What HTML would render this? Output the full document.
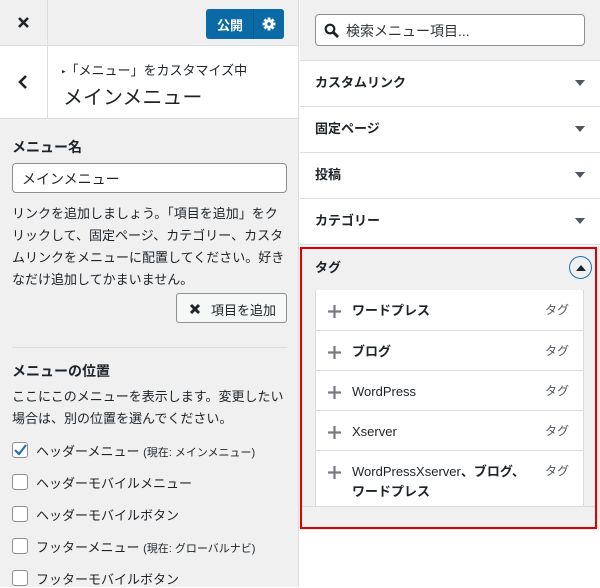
<!DOCTYPE html>
<html><head><meta charset="utf-8"><style>
*{box-sizing:border-box;margin:0;padding:0}
body{width:600px;height:587px;overflow:hidden;font-family:"Liberation Sans","Noto Sans CJK JP",sans-serif;color:#1d2327;background:#fff;position:relative;font-size:13px}
.a{position:absolute}
.left{left:0;top:0;width:299px;height:587px;background:#f0f0f1;border-right:1px solid #dcdcde}
.cb{position:absolute;left:12px;width:16px;height:16px;border:1px solid #8c8f94;border-radius:3px;background:#fff}
.cl{position:absolute;left:36px;font-size:13px}
.row{position:absolute;left:300px;width:300px;height:46px;border-bottom:1px solid #dcdcde;background:#fff}
.row b{position:absolute;left:15px;top:11px;font-size:13px}
.row i{position:absolute;right:15px;top:19px;width:0;height:0;border-left:5px solid transparent;border-right:5px solid transparent;border-top:6px solid #50575e}
.it{position:absolute;left:315px;width:269px;height:40px;background:#fff;border:1px solid #dcdcde;border-top:none}
.it svg{position:absolute;left:11px;top:14px}
.it .n{position:absolute;left:36px;top:11px;font-weight:bold;font-size:13px;line-height:20px}
.it .t{position:absolute;right:14px;top:11px;color:#50575e;font-size:12px}
</style></head><body>
<div class="a left">
 <div class="a" style="left:0;top:0;width:298px;height:46px;border-bottom:1px solid #dcdcde"></div>
 <div class="a" style="left:47px;top:0;width:1px;height:46px;background:#dcdcde"></div>
 <svg class="a" style="left:17px;top:16px" width="13" height="13"><path d="M2 2 L11 11 M11 2 L2 11" stroke="#1d2327" stroke-width="2.6"/></svg>
 <div class="a" style="left:206px;top:9px;width:78px;height:30px;background:#0a6aa5;border-radius:3px;color:#fff">
  <span class="a" style="left:11px;top:6px;font-weight:bold;font-size:13px">公開</span>
  <span class="a" style="left:47px;top:0;width:1px;height:30px;background:#08598b"></span>
  <svg class="a" style="left:56px;top:8px" width="14" height="14" viewBox="0 0 14 14"><g fill="#fff"><circle cx="7" cy="7" r="4.5"/><rect x="5.6" y="0.5" width="2.8" height="13"/><rect x="0.5" y="5.6" width="13" height="2.8"/><rect x="5.6" y="0.5" width="2.8" height="13" transform="rotate(45 7 7)"/><rect x="5.6" y="0.5" width="2.8" height="13" transform="rotate(-45 7 7)"/></g><circle cx="7" cy="7" r="1.8" fill="#0a6aa5"/></svg>
 </div>
 <div class="a" style="left:0;top:46px;width:298px;height:73px;background:#fff;border-bottom:1px solid #dcdcde"></div>
 <div class="a" style="left:47px;top:46px;width:1px;height:73px;background:#dcdcde"></div>
 <svg class="a" style="left:17px;top:74px" width="12" height="16"><path d="M9 2 L3 8 L9 14" stroke="#1d2327" stroke-width="2.6" fill="none"/></svg>
 <div class="a" style="left:62px;top:60px;font-size:13px"><span style="font-size:7px;vertical-align:middle">▸</span>「メニュー」をカスタマイズ中</div>
 <div class="a" style="left:63px;top:81px;font-size:20px">メインメニュー</div>
 <div class="a" style="left:12px;top:137px;font-weight:bold;font-size:14px">メニュー名</div>
 <div class="a" style="left:12px;top:163px;width:275px;height:30px;background:#fff;border:1px solid #8c8f94;border-radius:4px;padding:5px 9px;font-size:14px">メインメニュー</div>
 <div class="a" style="left:12px;top:203px;width:275px;font-size:13px;line-height:22px">リンクを追加しましょう。「項目を追加」をク<br>リックして、固定ページ、カテゴリー、カスタ<br>ムリンクをメニューに配置してください。好き<br>なだけ追加してかまいません。</div>
 <div class="a" style="left:176px;top:293px;width:111px;height:30px;border:1px solid #8c8f94;border-radius:3px;background:#f6f7f7;font-size:13px;padding:6px 0 0 34px">項目を追加</div>
 <svg class="a" style="left:189px;top:303px" width="12" height="12"><path d="M2 2 L10 10 M10 2 L2 10" stroke="#1d2327" stroke-width="3"/></svg>
 <div class="a" style="left:12px;top:347px;width:275px;height:1px;background:#dcdcde"></div>
 <div class="a" style="left:12px;top:361px;font-weight:bold;font-size:14px">メニューの位置</div>
 <div class="a" style="left:12px;top:386px;width:285px;font-size:13px;line-height:22px">ここにこのメニューを表示します。変更したい<br>場合は、別の位置を選んでください。</div>
 <div class="cb" style="top:442px"><svg width="14" height="14" style="position:absolute;left:0;top:0"><path d="M2 7 L6 11 L13 2" stroke="#2271b1" stroke-width="2.2" fill="none"/></svg></div>
 <div class="cl" style="top:441px">ヘッダーメニュー <span style="font-size:11px">(現在: メインメニュー)</span></div>
 <div class="cb" style="top:474px"></div><div class="cl" style="top:473px">ヘッダーモバイルメニュー</div>
 <div class="cb" style="top:506px"></div><div class="cl" style="top:505px">ヘッダーモバイルボタン</div>
 <div class="cb" style="top:538px"></div><div class="cl" style="top:537px">フッターメニュー <span style="font-size:11px">(現在: グローバルナビ)</span></div>
 <div class="cb" style="top:570px"></div><div class="cl" style="top:569px">フッターモバイルボタン</div>
</div>
<div class="a" style="left:300px;top:0;width:300px;height:61px;background:#f0f0f1;border-bottom:1px solid #dcdcde"></div>
<div class="a" style="left:315px;top:14px;width:270px;height:32px;background:#fff;border:1px solid #8c8f94;border-radius:4px">
 <svg class="a" style="left:8px;top:8px" width="16" height="16"><circle cx="6" cy="6" r="4.3" stroke="#1d2327" stroke-width="2.2" fill="none"/><path d="M9 9 L14 14" stroke="#1d2327" stroke-width="2.8"/></svg>
 <span class="a" style="left:30px;top:6px;font-size:14px;color:#2c3338">検索メニュー項目...</span>
</div>
<div class="row" style="top:61px"><b>カスタムリンク</b><i></i></div>
<div class="row" style="top:107px"><b>固定ページ</b><i></i></div>
<div class="row" style="top:153px"><b>投稿</b><i></i></div>
<div class="row" style="top:199px"><b>カテゴリー</b><i></i></div>
<div class="a" style="left:300px;top:246px;width:300px;height:284px;background:#f0f0f1"></div>
<div class="a" style="left:300px;top:247px;width:297px;height:282px;border:2px solid #e00000"></div>
<div class="a" style="left:315px;top:257px;font-weight:bold;font-size:13px">タグ</div>
<div class="a" style="left:569px;top:256px;width:23px;height:23px;border:1px solid #2271b1;border-radius:50%"><span class="a" style="left:6px;top:8px;border-left:5px solid transparent;border-right:5px solid transparent;border-bottom:6px solid #1d2327"></span></div>
<div class="a" style="left:315px;top:290px;width:269px;height:1px;background:#dcdcde"></div>
<div class="it" style="top:290px;height:41px"><svg width="15" height="15"><path d="M7.5 1V14M1 7.5H14" stroke="#787c82" stroke-width="2.2"/></svg><span class="n">ワードプレス</span><span class="t">タグ</span></div>
<div class="it" style="top:331px"><svg width="15" height="15"><path d="M7.5 1V14M1 7.5H14" stroke="#787c82" stroke-width="2.2"/></svg><span class="n">ブログ</span><span class="t">タグ</span></div>
<div class="it" style="top:371px"><svg width="15" height="15"><path d="M7.5 1V14M1 7.5H14" stroke="#787c82" stroke-width="2.2"/></svg><span class="n" style="font-weight:normal">WordPress</span><span class="t">タグ</span></div>
<div class="it" style="top:411px"><svg width="15" height="15"><path d="M7.5 1V14M1 7.5H14" stroke="#787c82" stroke-width="2.2"/></svg><span class="n" style="font-weight:normal">Xserver</span><span class="t">タグ</span></div>
<div class="it" style="top:451px;height:56px"><svg width="15" height="15"><path d="M7.5 1V14M1 7.5H14" stroke="#787c82" stroke-width="2.2"/></svg><span class="n"><span style="font-weight:normal">WordPressXserver</span>、ブログ、<br>ワードプレス</span><span class="t">タグ</span></div>
<div class="a" style="left:302px;top:506px;width:293px;height:1px;background:#dcdcde"></div>
</body></html>
